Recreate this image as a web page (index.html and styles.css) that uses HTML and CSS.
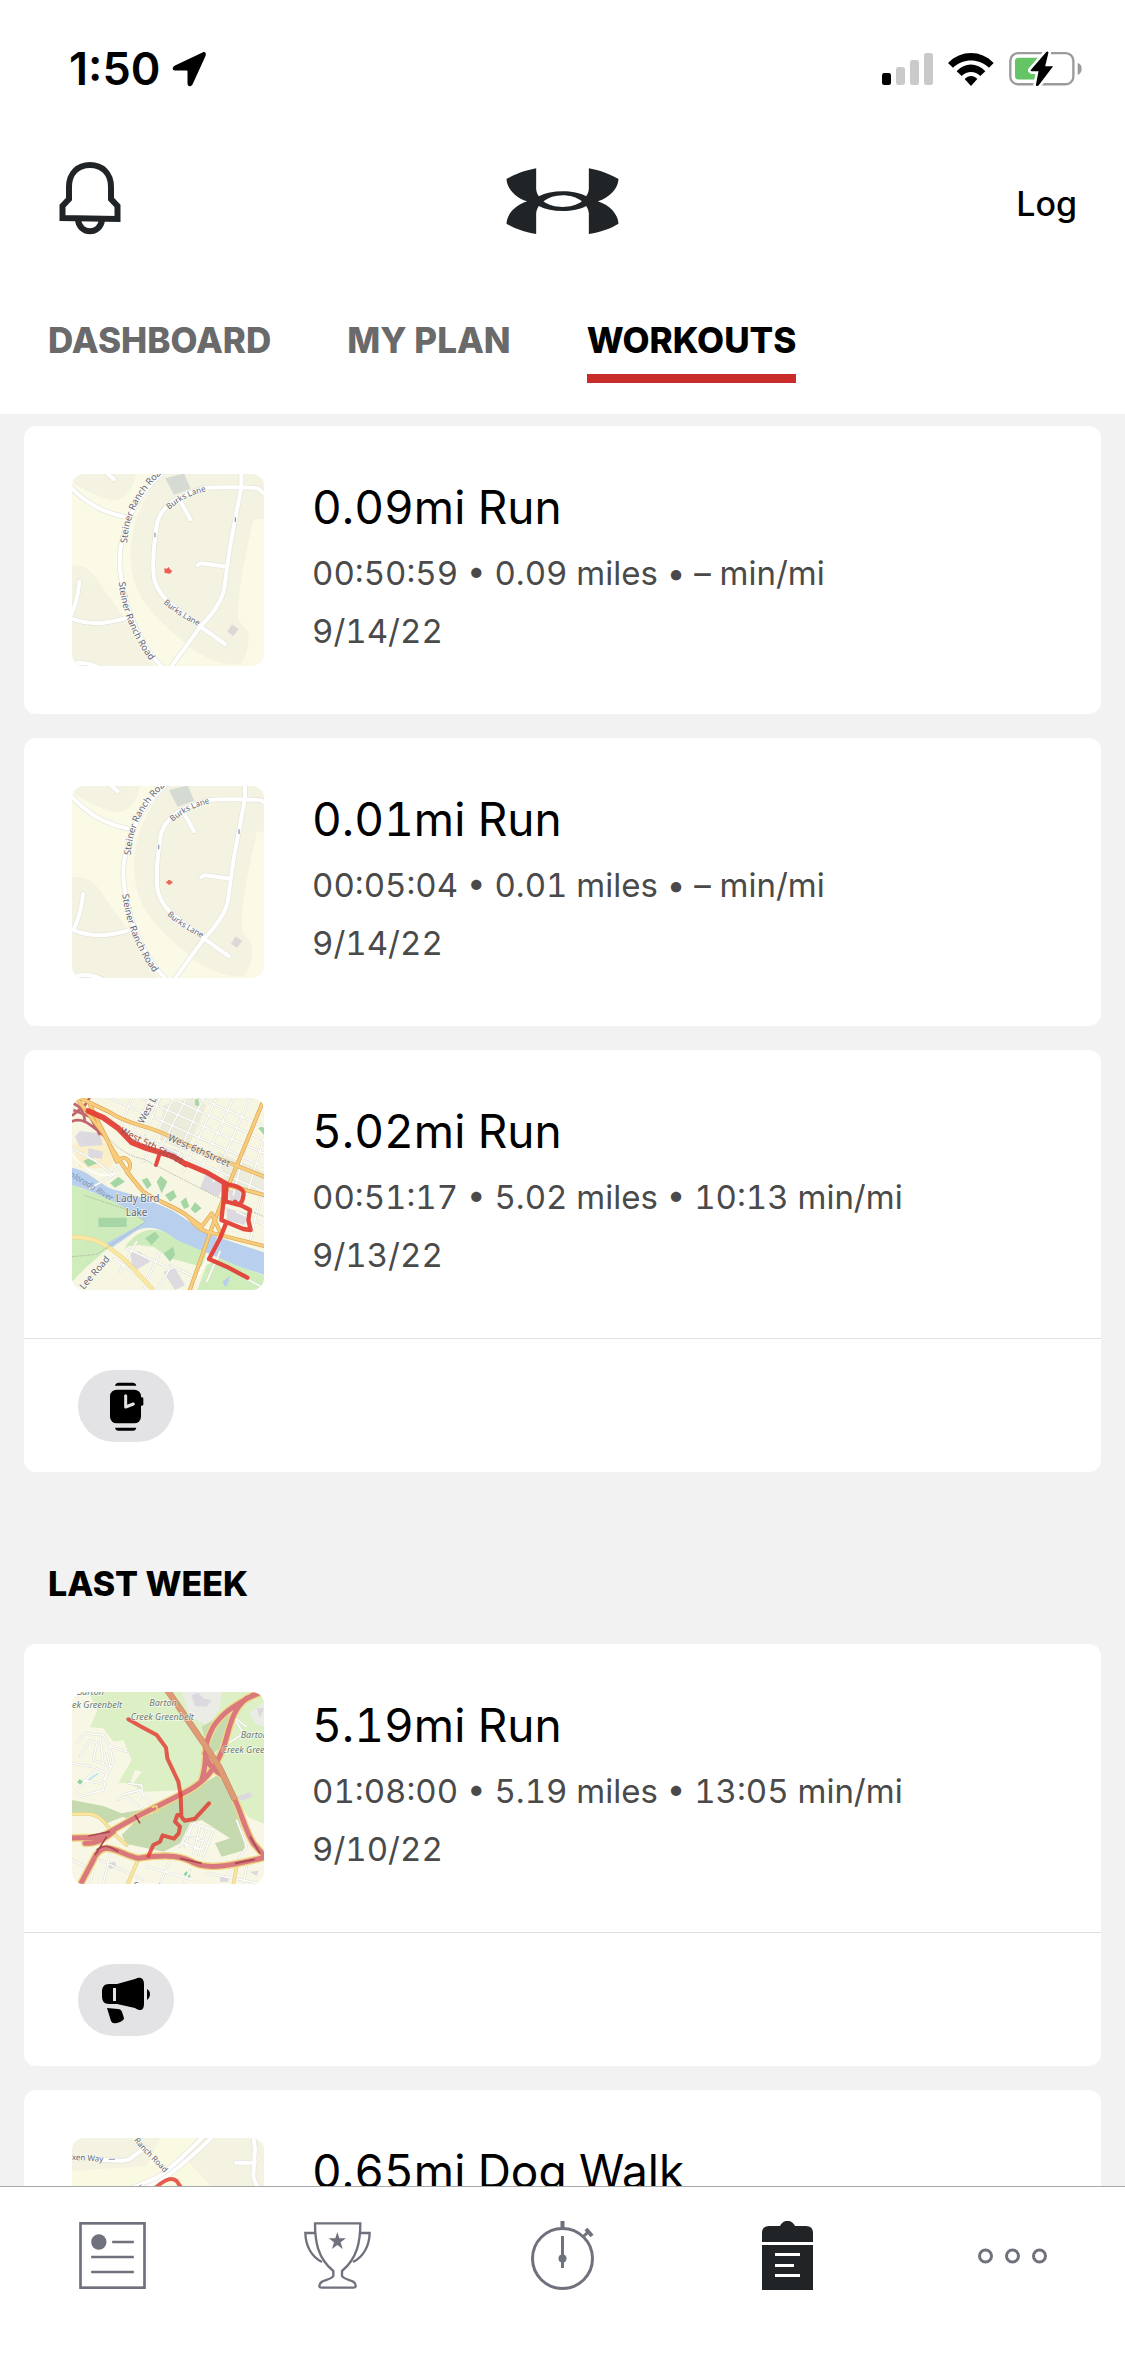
FILE: index.html
```html
<!DOCTYPE html>
<html lang="en">
<head>
    <meta charset="UTF-8">
    <meta name="viewport" content="width=device-width, initial-scale=1.0">
    <title>Workouts</title>
    <link rel="stylesheet" href="styles.css">
</head>
<body>
    <header class="header">
        <div class="status-bar">
            <div class="status-left">
                <span class="clock">1:50</span>
                <svg class="location" viewBox="0 0 34 36" width="34" height="36" aria-hidden="true">
                    <path d="M30.500 1.500 L3 14.500 C-0.500 16.500 0.500 19.500 3 19.500 H14.500 C15.300 19.500 15.500 19.800 15.500 20.500 V32.500 C15.500 36 19 36 20.500 33.500 L33.500 5 C34.500 2 33 0 30.500 1.500Z"/>
                </svg>
            </div>
            <div class="status-right">
                <svg viewBox="66 69 153 96" width="51" height="32" aria-hidden="true">
                    <rect x="66" y="129" width="27" height="36" rx="7"/>
                    <g fill="#cacaca">
                        <rect x="108" y="111" width="27" height="54" rx="7"/>
                        <rect x="150" y="90" width="27" height="75" rx="7"/>
                        <rect x="192" y="69" width="27" height="96" rx="7"/>
                    </g>
                </svg>
                <svg viewBox="264 66 138 99" width="46" height="33" aria-hidden="true">
                    <path d="M264 96 C303 56 363 56 401 96 L387 110 C355 81 311 81 279 110Z"/>
                    <path d="M290 121 C314 94 351 94 376 121 L361 135 C345 119 321 119 305 135Z"/>
                    <path d="M314 144 C326 132 341 132 352 144 L333 165Z"/>
                </svg>
                <svg viewBox="447 64 220 108" width="73" height="36" aria-hidden="true">
                    <rect x="451" y="70" width="190" height="94" rx="23" fill="none" stroke="#9b9b9b" stroke-width="7"/>
                    <path d="M654 100 C670 103 670 131 654 136Z" fill="#9b9b9b"/>
                    <rect x="465" y="84" width="82" height="66" rx="11" fill="#64c466"/>
                    <path d="M560 66 L512 122 Q512 124 515 125 H536 L528 166 Q530 172 536 168 L580 110 H556 L566 68 Q564 64 560 66Z" stroke="#fff" stroke-width="16" paint-order="stroke" stroke-linejoin="round"/>
                </svg>
            </div>
        </div>

        <div class="app-bar">
            <button class="icon-button" type="button" aria-label="Notifications">
                <svg viewBox="59 161 62 80" width="62" height="80" fill="none" stroke="#212427" stroke-width="6">
                    <path d="M62.500 218 V206 L69 199 V187 C69 173 78 165 90 165 C102 165 111 173 111 187 V199 L117.500 206 V219Z"/>
                    <path d="M78 220 C80 235 100 235 102 220"/>
                </svg>
            </button>
            <svg class="logo" viewBox="78 54 338 198" width="113" height="66" role="img" aria-label="Under Armour">
                <path fill-rule="evenodd" d="M168 55 C130 62 100 75 79 87 C80 115 105 143 141 154 C105 165 80 193 79 221 C100 234 130 246 168 252 V190 C169 180 172 174 176 168 C195 178 220 183 247 183 C275 183 300 178 318 168 C322 174 325 180 326 190 V252 C364 246 394 234 415 221 C414 193 389 165 353 154 C389 143 414 115 415 87 C394 75 364 62 326 55 V117 C325 127 322 133 318 139 C300 129 275 124 247 124 C220 124 195 129 176 139 C172 133 169 127 168 117Z M190 154 C205 142 225 136 247 136 C269 136 290 142 305 154 C290 166 269 171 247 171 C225 171 205 166 190 154Z"/>
            </svg>
            <button class="log-button" type="button">Log</button>
        </div>

        <nav class="tabs">
            <a class="tab" href="#dashboard">DASHBOARD</a>
            <a class="tab" href="#plan">MY PLAN</a>
            <a class="tab active" href="#workouts" aria-current="page">WORKOUTS</a>
        </nav>
    </header>

    <main class="feed">
        <article class="card">
            <div class="workout">
                <svg class="map" viewBox="156 162 576 576" role="img" aria-label="Route map">
                    <defs>
                        <path id="steinerUp" d="M321 370 C326 290 355 215 445 146"/>
                        <path id="steinerDown" d="M296 487 C307 580 340 660 405 742"/>
                        <path id="burksUp" d="M447 269 C475 245 510 225 560 213"/>
                        <path id="burksDown" d="M430 549 C460 577 495 597 540 621"/>
                        <path id="burksRoads" d="M750 235 L715 206 C690 200 620 202 560 203 C480 225 430 250 412 305 C400 380 395 430 402 475 C415 530 450 552 541 620 L615 672 M664 150 V200 L630 380 L612 510 C600 560 560 600 541 620 L445 752 M482 245 L511 298 M533 436 C540 427 545 430 555 431 L620 440 M130 180 C190 245 240 275 312 290 M178 485 C175 530 165 560 150 592 M130 586 C190 615 250 618 330 590 M250 150 L282 178 M130 738 C190 720 220 732 250 750 M450 140 C330 230 285 370 303 470 C320 590 370 690 440 755"/>
                        <g id="steinerMap">
                            <rect x="140" y="150" width="600" height="600" fill="#fafae6"/>
                            <path fill="#f4f3e2" d="M445 150 C350 230 308 380 345 490 C370 570 450 630 520 690 C570 722 620 737 660 733 C690 700 690 640 680 630 L655 600 C650 500 690 350 700 300 L740 295 V150Z M140 150 H350 C340 220 310 245 270 240 C220 225 170 200 140 175Z M140 437 C210 425 230 480 260 520 C290 560 320 600 380 700 L410 750 H140Z"/>
                            <path d="M436 175 L492 160 L512 206 L462 224Z" fill="#d5dad2"/>
                            <path d="M636 613 L656 627 L640 648 L622 635Z" fill="#dcd8d6"/>
                            <use href="#burksRoads" class="road-case"/>
                            <use href="#burksRoads" class="road"/>
                            <path d="M646 292 V306 M405 338 V352" stroke="#8f9db5" stroke-width="4"/>
                            <g class="street-name">
                                <text font-size="28"><textPath href="#steinerUp">Steiner Ranch Road</textPath></text>
                                <text font-size="28"><textPath href="#steinerDown">Steiner Ranch Road</textPath></text>
                                <text font-size="24"><textPath href="#burksUp">Burks Lane</textPath></text>
                                <text font-size="24"><textPath href="#burksDown">Burks Lane</textPath></text>
                            </g>
                        </g>
                    </defs>
                    <use href="#steinerMap"/>
                    <path d="M433 445 L440 446 L446 441 L450 448 L457 453 L450 461 L434 459Z" fill="#eb5f57"/>
                </svg>
                <div class="workout-info">
                    <h2 class="workout-title">0.09mi Run</h2>
                    <p>00:50:59 • 0.09 miles • – min/mi</p>
                    <p>9/14/22</p>
                </div>
            </div>
        </article>

        <article class="card">
            <div class="workout">
                <svg class="map" viewBox="145 162 576 576" role="img" aria-label="Route map">
                    <use href="#steinerMap"/>
                    <path d="M428 451 H446 M437 444 V458" stroke="#eb5f57" stroke-width="7"/>
                </svg>
                <div class="workout-info">
                    <h2 class="workout-title">0.01mi Run</h2>
                    <p>00:05:04 • 0.01 miles • – min/mi</p>
                    <p>9/14/22</p>
                </div>
            </div>
        </article>

        <article class="card">
            <div class="workout">
                <svg class="map" viewBox="36 39 576 576" role="img" aria-label="Route map">
                    <defs>
                        <path id="downtownGrid" d="M150 39 L612 245 M240 39 L612 205 M330 39 L612 165 M420 39 L612 125 M130 105 L300 180 L612 320 M340 39 L250 230 M380 39 L300 190 M430 39 L345 230 M470 39 L370 260 M520 39 L420 260 M570 39 L460 290 M215 39 L185 120 M270 39 L225 130 M300 39 L255 150 M560 170 L520 330 M612 160 L560 330 M36 190 L110 230 L160 270 L90 310 M190 235 L160 260 M300 500 L250 615 M200 490 L330 550 L290 615 M160 520 L260 590 M230 470 L180 560 M330 540 L410 580 M530 380 L612 420 M600 340 L570 470 M440 590 L480 500 M540 570 L612 610"/>
                        <path id="downtownMain" d="M60 39 L150 82 C200 118 260 120 320 150 L450 210 L612 275 M500 300 L612 330 M612 42 L560 170 L510 290 L455 430 L388 620 M42 30 L130 145 C160 200 205 270 250 320 C300 355 350 365 385 395 C410 430 430 440 460 445 L620 485 M90 60 L140 160 L170 230 C200 200 220 240 205 255 M200 260 L240 310 M385 395 L425 425 L455 385 L480 440"/>
                    </defs>
                    <rect x="36" y="39" width="576" height="576" fill="#f7f6e3"/>
                    <path fill="#ececdc" d="M310 60 L400 39 L440 60 L380 200 L300 165Z M470 200 L612 260 V340 L500 300Z"/>
                    <path fill="#fbeecb" d="M36 180 L120 150 L170 210 L150 250 L60 250Z"/>
                    <path fill="#dddae0" d="M60 138 L120 145 L128 180 L60 185 L45 155Z M85 190 L130 200 L125 222 L85 215Z M310 185 L350 195 L360 220 L310 205Z M440 260 L495 290 L475 335 L420 310Z M505 315 L540 315 L545 350 L510 350Z M500 370 L560 385 L555 420 L500 405Z M210 500 L240 500 L270 530 L220 560Z M310 560 L345 550 L375 600 L345 615Z"/>
                    <path fill="#cfecbb" d="M36 300 L80 316 L150 342 L230 386 L256 410 L150 485 L80 545 L36 590Z M195 485 C240 425 290 420 350 460 L440 502 L425 545 L330 520 L280 485 L235 480Z M440 540 L480 520 L620 575 V620 H410Z M520 560 L612 600Z"/>
                    <path fill="#b8d0ee" d="M36 248 C80 255 110 290 155 312 C210 325 270 345 340 378 C390 410 430 445 470 455 L620 505 V572 L540 545 L440 503 L350 465 C300 425 260 420 225 440 L150 492 L130 480 L256 410 C200 365 120 325 36 300Z M487 590 L510 572 L503 600 L495 605Z"/>
                    <path fill="#a6d6a6" d="M115 398 H200 V426 H115Z M70 228 L95 215 L112 235 L85 245Z M150 295 L175 275 L195 290 L165 308Z M245 285 L262 278 L275 300 L262 312Z M290 290 L302 272 L322 290 L305 325Z M315 330 L340 315 L350 335 L330 350Z M362 350 L378 337 L388 365 L372 372Z M392 372 L405 352 L425 370 L405 385Z M255 460 L285 440 L298 455 L275 480Z M310 505 L340 485 L345 510 L330 530Z M595 130 L612 120 V150Z M405 45 L415 40 L418 65 L405 60Z"/>
                    <use href="#downtownGrid" class="street-case"/>
                    <use href="#downtownGrid" class="street"/>
                    <path d="M36 210 C90 270 130 280 165 265 M400 600 L470 470 L490 400" class="street"/>
                    <path d="M36 456 C110 455 150 485 200 530 L280 615" fill="none" stroke="#e8d58e" stroke-width="13"/>
                    <path d="M36 456 C110 455 150 485 200 530 L280 615" fill="none" stroke="#fae8a2" stroke-width="10"/>
                    <path d="M100 90 C130 150 180 210 250 222 L470 335 L612 395 M36 515 L110 508 L258 410 L190 370 L70 330" fill="none" stroke="#a3a39a" stroke-width="2" stroke-dasharray="5 3"/>
                    <path d="M30 112 C70 90 100 128 135 155 M30 52 C65 62 70 80 75 108 M36 92 L75 60 L90 36 M40 75 L90 95 L120 150" fill="none" stroke="#c3656d" stroke-width="8"/>
                    <use href="#downtownMain" class="main-case"/>
                    <use href="#downtownMain" class="main-road"/>
                    <g class="route">
                        <path d="M85 78 L130 98 L175 130 L215 172 L260 190 L300 202 L340 215 L378 238" stroke-width="17"/>
                        <path d="M378 236 L440 262 L500 297" stroke-width="15"/>
                        <path d="M300 202 L296 215 L288 240" stroke-width="12"/>
                        <path d="M498 298 C530 300 555 312 550 332 C547 360 532 362 525 350 M500 300 L494 325 L492 348 L545 362 L570 375 L565 405 L572 435 L550 432 L484 405 L490 355"/>
                        <path d="M498 415 L480 460 L447 522 L500 545 L562 578"/>
                        <path d="M495 300 L494 348" stroke-width="20"/>
                    </g>
                    <g class="place-name">
                        <text transform="translate(250 118) rotate(-62)" font-size="28">West L</text>
                        <text transform="translate(322 165) rotate(24)" font-size="29">West 6thStreet</text>
                        <text class="under" transform="translate(178 143) rotate(27)" font-size="29">West 5th Street</text>
                        <text x="167" y="350" font-size="30">Lady Bird</text>
                        <text x="197" y="392" font-size="30">Lake</text>
                        <text class="water" transform="translate(14 265) rotate(31)" font-size="25">Colorado River</text>
                        <text transform="translate(56 632) rotate(-49)" font-size="28">E Lee Road</text>
                    </g>
                </svg>
                <div class="workout-info">
                    <h2 class="workout-title">5.02mi Run</h2>
                    <p>00:51:17 • 5.02 miles • 10:13 min/mi</p>
                    <p>9/13/22</p>
                </div>
            </div>
            <div class="card-footer">
                <span class="badge">
                    <svg viewBox="324 184 105 147" width="35" height="49" role="img" aria-label="Recorded on watch">
                        <path d="M342 195 C344 188 348 186 352 186 H396 C401 186 404 188 406 195Z M342 321 H406 C404 328 401 330 396 330 H352 C348 330 344 328 342 321Z"/>
                        <rect x="327" y="207" width="93" height="101" rx="20"/>
                        <rect x="415" y="230" width="12" height="25" rx="4"/>
                        <path d="M374 225 V259 L397 250" fill="none" stroke="#e3e3e5" stroke-width="9" stroke-linecap="round" stroke-linejoin="round"/>
                    </svg>
                </span>
            </div>
        </article>

        <h2 class="section-title">LAST WEEK</h2>

        <article class="card">
            <div class="workout">
                <svg class="map" viewBox="36 36 576 576" role="img" aria-label="Route map">
                    <defs>
                        <path id="creekStreets" d="M50 190 L75 160 L130 165 L150 200 L200 215 M60 230 L90 180 L110 190 L100 240 L150 260 L140 220 M50 330 L110 265 L140 280 L130 330 L60 350Z M70 300 L120 310 M36 250 L90 260 M120 170 L130 250 M150 200 L160 250 L130 300 M175 360 L200 350 L240 380 L275 400 M185 345 L240 330 L280 380 M205 310 L245 315 L250 350 M360 500 L400 430 L460 450 L430 530 M380 465 L445 490 M370 490 L430 510 M395 440 L375 500 M420 440 L400 520 M440 445 L415 525 M36 540 L100 570 L90 612 M120 540 L250 600 M150 520 L130 612 M330 540 L300 612 M390 570 L370 612 M260 560 L400 600 M440 580 L612 612 M560 560 L550 612 M500 590 L560 500 L530 420 M490 200 L550 160 L520 110 L560 140"/>
                        <path id="creekYellow" d="M30 402 H90 C125 408 135 430 160 460 L200 495 M234 540 L203 612 M530 560 L520 612"/>
                        <path id="creekHighway" d="M30 474 L120 472 L240 405 L370 340 C450 300 470 250 490 205 C510 140 515 90 560 55 L615 32 M425 300 C450 220 420 215 460 140 C490 95 520 80 580 45 M435 220 C445 260 465 270 485 285 M525 360 C545 400 555 450 580 490 L615 530 M55 625 L100 540 C130 470 180 525 235 535 C330 520 370 530 405 550 C450 570 520 555 615 532 M75 490 C110 490 130 480 160 455"/>
                    </defs>
                    <rect x="36" y="36" width="576" height="576" fill="#f8f7e6"/>
                    <path fill="#ddf0c5" d="M85 36 H612 V432 L565 412 L470 272 L380 330 L250 335 L215 315 L245 275 L225 270 L210 310 L175 308 L215 240 L190 180 L160 185 L130 145 L90 142 L112 90Z"/>
                    <path fill="#ecece6" d="M365 36 H485 L478 90 L440 135 L390 110Z M570 100 L612 65 V140 L585 130Z"/>
                    <path fill="#dcd8df" d="M395 45 L415 38 L430 55 L455 60 L440 80 L405 78Z M590 85 H612 L600 115Z M140 550 L165 545 L170 560 L150 568Z M530 350 L570 335 L578 350 L545 362Z M480 590 L505 585 V605 H480Z M570 575 L595 572 L590 588Z"/>
                    <path fill="#c6dab0" d="M36 360 L130 378 L185 400 L250 388 L375 345 L480 280 L522 350 L550 470 L555 510 L485 530 L465 490 L510 475 L425 420 L390 430 L360 490 L310 515 L200 492 L185 465 L220 430 L190 410 L140 430 L80 400 H36Z M425 140 L525 85 L490 200 L450 225Z"/>
                    <path d="M55 302 L68 312 M375 578 L388 592" stroke="#8bd6a0" stroke-width="12"/>
                    <path d="M85 300 L115 280" stroke="#aee0f0" stroke-width="4"/>
                    <use href="#creekStreets" class="street-case"/>
                    <use href="#creekStreets" class="street"/>
                    <use href="#creekYellow" class="yellow-case"/>
                    <use href="#creekYellow" class="yellow-road"/>
                    <use href="#creekHighway" class="highway-edge"/>
                    <use href="#creekHighway" class="highway"/>
                    <path d="M318 25 C360 85 400 145 435 195 L480 265 L525 360" fill="none" stroke="#c98a66" stroke-width="19"/>
                    <path d="M318 25 C360 85 400 145 435 195 L480 265 L525 360" fill="none" stroke="#df9b76" stroke-width="15"/>
                    <path d="M85 468 L150 455 M110 510 C135 490 150 500 175 515 M105 525 L140 470 M360 535 L425 550 M525 550 L585 538 M570 470 L600 520 M225 405 L240 430" fill="none" stroke="#a94852" stroke-width="5"/>
                    <path d="M275 382 L290 378 L294 400" fill="none" stroke="#f0d878" stroke-width="5"/>
                    <g class="route dim">
                        <path d="M205 118 L240 138 L290 165 L318 203 L322 235 L355 305 L362 345 L364 405 L352 405 L345 425 L360 440 L356 460 L342 476 L308 466 L300 485 L280 495 L265 528"/>
                        <path d="M360 405 L374 422 L405 416 L447 370"/>
                    </g>
                    <g class="park-name">
                        <text x="50" y="44">Barton</text>
                        <text x="36" y="84">ek Greenbelt</text>
                        <text x="268" y="79">Barton</text>
                        <text x="212" y="121">Creek Greenbelt</text>
                        <text x="542" y="174">Barton</text>
                        <text x="485" y="218">Creek Greenbelt</text>
                    </g>
                    <text class="town-name" x="222" y="626">Sunset</text>
                </svg>
                <div class="workout-info">
                    <h2 class="workout-title">5.19mi Run</h2>
                    <p>01:08:00 • 5.19 miles • 13:05 min/mi</p>
                    <p>9/10/22</p>
                </div>
            </div>
            <div class="card-footer">
                <span class="badge">
                    <svg viewBox="101 1977 50 47" width="50" height="47" role="img" aria-label="Coached workout">
                        <path fill-rule="evenodd" d="M117 1984 L135 1979 C141 1976 144 1979 144 1984 V2004 C144 2010 141 2012 135 2008 L117 2004 H109 C104 2004 102 2001 102 1996 V1992 C102 1987 104 1984 109 1984Z M113 1988 V2001 H116 V1988Z"/>
                        <path d="M147 1989 C151 1991 151 1997 147 2000Z"/>
                        <path d="M107 2008 L118 2009 Q121 2009 122 2012 L124 2018 Q124 2021 117 2023 Q112 2024 111 2021Z"/>
                    </svg>
                </span>
            </div>
        </article>

        <article class="card">
            <div class="workout">
                <svg class="map" viewBox="36 36 576 576" role="img" aria-label="Route map">
                    <defs>
                        <path id="ranchName" d="M212 28 C240 75 290 110 318 148"/>
                        <path id="ranchRoads" d="M470 20 C420 70 340 140 300 165 L180 220 M440 20 C400 65 330 130 290 155 L170 205 M110 100 C160 103 200 110 215 95 L255 65 M580 30 L585 70 L580 150 C585 180 600 190 610 200 M528 110 H585"/>
                    </defs>
                    <rect x="36" y="36" width="576" height="576" fill="#f4f3e2"/>
                    <path fill="#fafae2" d="M300 36 H410 L370 90 L460 190 H612 V290 H36 V135 L260 120Z"/>
                    <use href="#ranchRoads" class="road-case"/>
                    <use href="#ranchRoads" class="road"/>
                    <path d="M146 100 H165 M235 182 L245 176" stroke="#8f9db5" stroke-width="3"/>
                    <path class="route dim" d="M270 200 L290 182 C310 165 335 150 350 165 L370 195 L360 260"/>
                    <g class="street-name">
                        <text x="22" y="101" font-size="24" transform="rotate(4 36 101)">exen Way</text>
                        <text font-size="24"><textPath href="#ranchName">s Ranch Road</textPath></text>
                    </g>
                </svg>
                <div class="workout-info">
                    <h2 class="workout-title">0.65mi Dog Walk</h2>
                </div>
            </div>
        </article>
    </main>

    <nav class="bottom-nav">
        <a href="#feed" aria-label="Feed">
            <svg viewBox="55 285 206 207" width="69" height="69" fill="none" stroke="#6f717c" stroke-width="8">
                <rect x="62" y="292" width="192" height="193"/>
                <circle cx="117" cy="348" r="23" fill="#6f717c" stroke="none"/>
                <path d="M157 348 H222 M94 393 H222 M94 438 H222"/>
            </svg>
        </a>
        <a href="#challenges" aria-label="Challenges">
            <svg viewBox="729 285 207 207" width="69" height="69" fill="none" stroke="#6f717c" stroke-width="7">
                <path d="M765 292 H901 C901 345 893 395 846 435 V450 C855 465 889 459 887 482 Q886 485 880 485 H785 Q779 485 778 482 C777 459 811 465 820 450 V435 C772 395 765 345 765 292Z"/>
                <path d="M765 321 H736 C737 360 755 393 786 408 M901 321 H929 C928 360 910 393 879 408"/>
                <path d="M832 318 L838 337 H858 L842 349 L848 369 L832 357 L816 369 L822 349 L806 337 H826Z" fill="#6f717c" stroke="none"/>
            </svg>
        </a>
        <a href="#record" aria-label="Record">
            <svg viewBox="528 2221 69 69" width="69" height="69" fill="none" stroke="#6f717c" stroke-width="3">
                <circle cx="562.500" cy="2258.500" r="30"/>
                <path d="M562.500 2236 V2268 M584 2236 L589 2231"/>
                <path d="M562.500 2221 V2228 M586 2229 L592 2236" stroke-width="4"/>
                <circle cx="562.500" cy="2258.500" r="4" fill="#6f717c" stroke="none"/>
            </svg>
        </a>
        <a href="#workouts" aria-label="Workouts" aria-current="page">
            <svg viewBox="753 2221 69 69" width="69" height="69" fill="#212427">
                <path d="M762 2242 V2233 Q762 2226 769 2226 H780 C783 2219 792 2219 795 2226 H806 Q813 2226 813 2233 V2242Z"/>
                <path fill-rule="evenodd" d="M762 2245 H813 V2290 H762Z M775 2253 V2256 H800 V2253Z M775 2264 V2267 H794 V2264Z M775 2274 V2277 H800 V2274Z"/>
            </svg>
        </a>
        <a href="#more" aria-label="More">
            <svg viewBox="977 2221 71 69" width="71" height="69" fill="none" stroke="#6f717c" stroke-width="3">
                <circle cx="985.500" cy="2256" r="6"/>
                <circle cx="1012.500" cy="2256" r="6"/>
                <circle cx="1039.500" cy="2256" r="6"/>
            </svg>
        </a>
    </nav>
</body>
</html>
```

FILE: styles.css
```css
* {
    margin: 0;
    padding: 0;
    box-sizing: border-box;
}

body {
    font-family: Inter, 'Liberation Sans', sans-serif;
    background: #f2f2f2;
    color: #000;
    height: 100vh;
    display: flex;
    flex-direction: column;
    overflow: hidden;
}

svg {
    display: block;
}

a {
    color: inherit;
    text-decoration: none;
}

button {
    border: none;
    background: none;
    color: inherit;
    font-family: inherit;
    cursor: pointer;
}

/* header */

.header {
    background: #fff;
    flex: none;
}

.status-bar {
    display: flex;
    align-items: center;
    justify-content: space-between;
    height: 138px;
    padding: 0 43px 0 69px;
}

.status-left {
    display: flex;
    align-items: center;
    gap: 12px;
}

.status-right {
    display: flex;
    align-items: center;
    gap: 15px;
}

.clock {
    font-size: 45px;
    font-weight: 600;
    line-height: 56px;
}

.app-bar {
    display: grid;
    grid-template-columns: 1fr auto 1fr;
    align-items: center;
    height: 126px;
    padding: 0 48px;
}

.icon-button {
    justify-self: start;
    padding-left: 11px;
}

.logo {
    fill: #212427;
}

.log-button {
    justify-self: end;
    font-size: 34px;
    font-weight: 500;
    line-height: 48px;
    padding-top: 6px;
}

.tabs {
    display: flex;
    gap: 76px;
    padding: 52px 48px 31px;
}

.tab {
    font-size: 35px;
    font-weight: 800;
    line-height: 48px;
    padding-bottom: 10px;
    border-bottom: 9px solid transparent;
    color: #6a6a6a;
}

.tab.active {
    color: #000;
    border-color: #c92a2a;
}

/* workout list */

.feed {
    flex: 1;
    min-height: 0;
    overflow: hidden;
    padding: 12px 24px 0;
}

.card {
    background: #fff;
    border-radius: 12px;
    margin-bottom: 24px;
}

.workout {
    display: flex;
    gap: 48px;
    padding: 48px;
}

.map {
    flex: none;
    width: 192px;
    height: 192px;
    border-radius: 12px;
}

.workout-info {
    font-size: 33px;
    font-variant-numeric: tabular-nums;
    line-height: 58px;
    color: #4a4a4a;
}

.workout-title {
    font-size: 46px;
    font-weight: 400;
    line-height: 66px;
    margin-bottom: 4px;
    color: #000;
}

.card-footer {
    border-top: 1px solid #e0e0e0;
    padding: 31px 54px 30px;
}

.badge {
    display: flex;
    align-items: center;
    justify-content: center;
    width: 96px;
    height: 72px;
    border-radius: 36px;
    background: #e3e3e5;
}

.section-title {
    font-size: 34px;
    font-weight: 800;
    line-height: 48px;
    padding: 64px 24px 36px;
}

/* maps */

.road-case,
.road,
.street-case,
.street,
.main-case,
.main-road,
.yellow-case,
.yellow-road,
.highway-edge,
.highway,
.route {
    fill: none;
    stroke-linecap: round;
    stroke-linejoin: round;
}

.road-case {
    stroke: #e4e3d9;
    stroke-width: 16px;
}

.road {
    stroke: #fff;
    stroke-width: 12px;
}

.street-case {
    stroke: #dddcd0;
    stroke-width: 7px;
}

.street {
    stroke: #fff;
    stroke-width: 4px;
}

.main-case {
    stroke: #dda650;
    stroke-width: 12px;
}

.main-road {
    stroke: #f8cd7d;
    stroke-width: 8px;
}

.yellow-case {
    stroke: #e2cf88;
    stroke-width: 11px;
}

.yellow-road {
    stroke: #fae69c;
    stroke-width: 7px;
}

.highway-edge {
    stroke: #f0d987;
    stroke-width: 23px;
}

.highway {
    stroke: #d9787d;
    stroke-width: 15px;
}

.route {
    stroke: #e23a32;
    stroke-width: 13px;
    opacity: 0.92;
}

.route.dim {
    stroke-width: 12px;
    opacity: 0.82;
}

.street-name,
.place-name,
.park-name,
.town-name {
    font-family: 'Noto Sans', sans-serif;
    fill: #66666f;
    stroke: rgba(255, 255, 255, 0.7);
    stroke-width: 4px;
    paint-order: stroke;
}

.place-name .under {
    fill: #96524f;
    stroke: none;
}

.place-name .water {
    fill: #8092b4;
    font-style: italic;
    stroke: none;
}

.park-name {
    fill: #6b7a70;
    font-size: 27px;
    font-style: italic;
}

.town-name {
    font-size: 26px;
}

/* bottom navigation */

.bottom-nav {
    flex: none;
    display: grid;
    grid-template-columns: repeat(5, 1fr);
    justify-items: center;
    background: #fff;
    border-top: 1px solid #a9a9a9;
    padding: 34px 0 82px;
}
```
